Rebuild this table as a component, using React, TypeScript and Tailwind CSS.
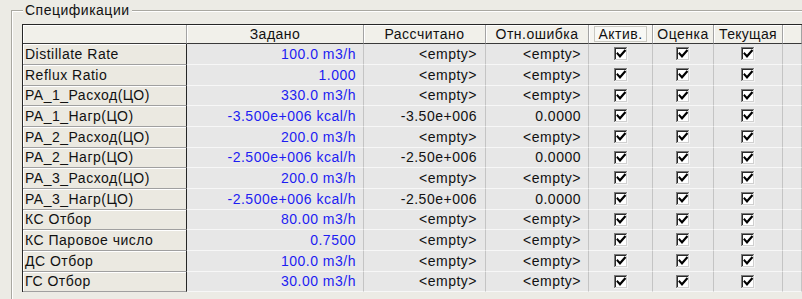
import React from "react";

type Row = { name: string; set: string; calc: string; err: string };

const rows: Row[] = [
  { name: "Distillate Rate", set: "100.0 m3/h", calc: "<empty>", err: "<empty>" },
  { name: "Reflux Ratio", set: "1.000", calc: "<empty>", err: "<empty>" },
  { name: "PA_1_Расход(ЦО)", set: "330.0 m3/h", calc: "<empty>", err: "<empty>" },
  { name: "PA_1_Нагр(ЦО)", set: "-3.500e+006 kcal/h", calc: "-3.50e+006", err: "0.0000" },
  { name: "PA_2_Расход(ЦО)", set: "200.0 m3/h", calc: "<empty>", err: "<empty>" },
  { name: "PA_2_Нагр(ЦО)", set: "-2.500e+006 kcal/h", calc: "-2.50e+006", err: "0.0000" },
  { name: "PA_3_Расход(ЦО)", set: "200.0 m3/h", calc: "<empty>", err: "<empty>" },
  { name: "PA_3_Нагр(ЦО)", set: "-2.500e+006 kcal/h", calc: "-2.50e+006", err: "0.0000" },
  { name: "КС Отбор", set: "80.00 m3/h", calc: "<empty>", err: "<empty>" },
  { name: "КС Паровое число", set: "0.7500", calc: "<empty>", err: "<empty>" },
  { name: "ДС Отбор", set: "100.0 m3/h", calc: "<empty>", err: "<empty>" },
  { name: "ГС Отбор", set: "30.00 m3/h", calc: "<empty>", err: "<empty>" },
];

function Check() {
  return (
    <svg width="14" height="14" viewBox="0 0 14 14">
      <g shapeRendering="crispEdges">
        <rect x="0" y="0" width="14" height="14" fill="#ffffff" />
        <path d="M0 0h13v1H1v12H0z" fill="#7a7a7a" />
        <path d="M1 1h11v1H2v10H1z" fill="#2a2a2a" />
        <path d="M13 0h1v14H0v-1h13z" fill="#f4f4f4" />
        <path d="M12 1h1v12H1v-1h11z" fill="#cfcfcf" />
      </g>
      <path d="M3.6 6.6 L6 9.3 L10.8 3.8" fill="none" stroke="#000" strokeWidth="2.1" strokeLinecap="square" />
    </svg>
  );
}

const hdr =
  "h-[19px] flex items-center justify-center bg-[#f1f0ea] border-r border-b border-r-[#a3a3a3] border-b-[#3a3a3a] shadow-[inset_1px_1px_0_#ffffff] leading-none";

export default function App() {
  return (
    <div className="w-[802px] h-[299px] overflow-hidden bg-[#ecebe5] pl-[11px] pt-[10px] font-['Liberation_Sans',sans-serif] text-[14px] tracking-[0.5px] text-[#111]">
      <div className="relative h-[400px] border-l border-t border-[#a9a8a1] shadow-[inset_1px_1px_0_#ffffff] pl-[10px] pt-[13px]">
        <span className="absolute left-[11px] -top-[9px] bg-[#ecebe5] px-[2px] leading-[16px]">
          Спецификации
        </span>
        <div className="grid grid-cols-[164px_177px_122px_103px_64px_61px_69px_1fr] border-l border-t border-[#262626]">
          <div className={hdr + " border-r-[#262626]"}></div>
          <div className={hdr}>Задано</div>
          <div className={hdr}>Рассчитано</div>
          <div className={hdr}>Отн.ошибка</div>
          <div className={hdr + " bg-[#f6f5f1]"}>
            <span className="px-[3px] h-[16px] flex items-center border border-[#c9c8c1] bg-[#f8f8f5]">Актив.</span>
          </div>
          <div className={hdr}>Оценка</div>
          <div className={hdr + " tracking-[0.3px]"}>Текущая</div>
          <div className={hdr}></div>
          {rows.map((r, i) => {
            const h = i % 3 === 2 ? "h-[20px]" : "h-[21px]";
            const cell =
              h + " flex items-center bg-[#e7e7e7] border-r border-b border-r-[#c4c4c4] border-b-[#f7f7f7]";
            return (
              <React.Fragment key={i}>
                <div
                  className={
                    h +
                    " flex items-center pl-[2px] bg-[#ebe9e1] border-r border-b border-r-[#262626] border-b-[#a0a0a0] shadow-[inset_1px_1px_0_#ffffff] whitespace-nowrap"
                  }
                >
                  {r.name}
                </div>
                <div className={cell + " justify-end pr-[7px] whitespace-nowrap text-[#1d1df2]"}>{r.set}</div>
                <div className={cell + " justify-end pr-[8px] whitespace-nowrap"}>{r.calc}</div>
                <div className={cell + " justify-end pr-[7px] whitespace-nowrap"}>{r.err}</div>
                <div className={cell + " justify-center " + (i === 8 ? "bg-[#d4d4d4]" : "")}>
                  <Check />
                </div>
                <div className={cell + " justify-center"}>
                  <Check />
                </div>
                <div className={cell + " justify-center"}>
                  <Check />
                </div>
                <div className={cell}></div>
              </React.Fragment>
            );
          })}
        </div>
      </div>
    </div>
  );
}
